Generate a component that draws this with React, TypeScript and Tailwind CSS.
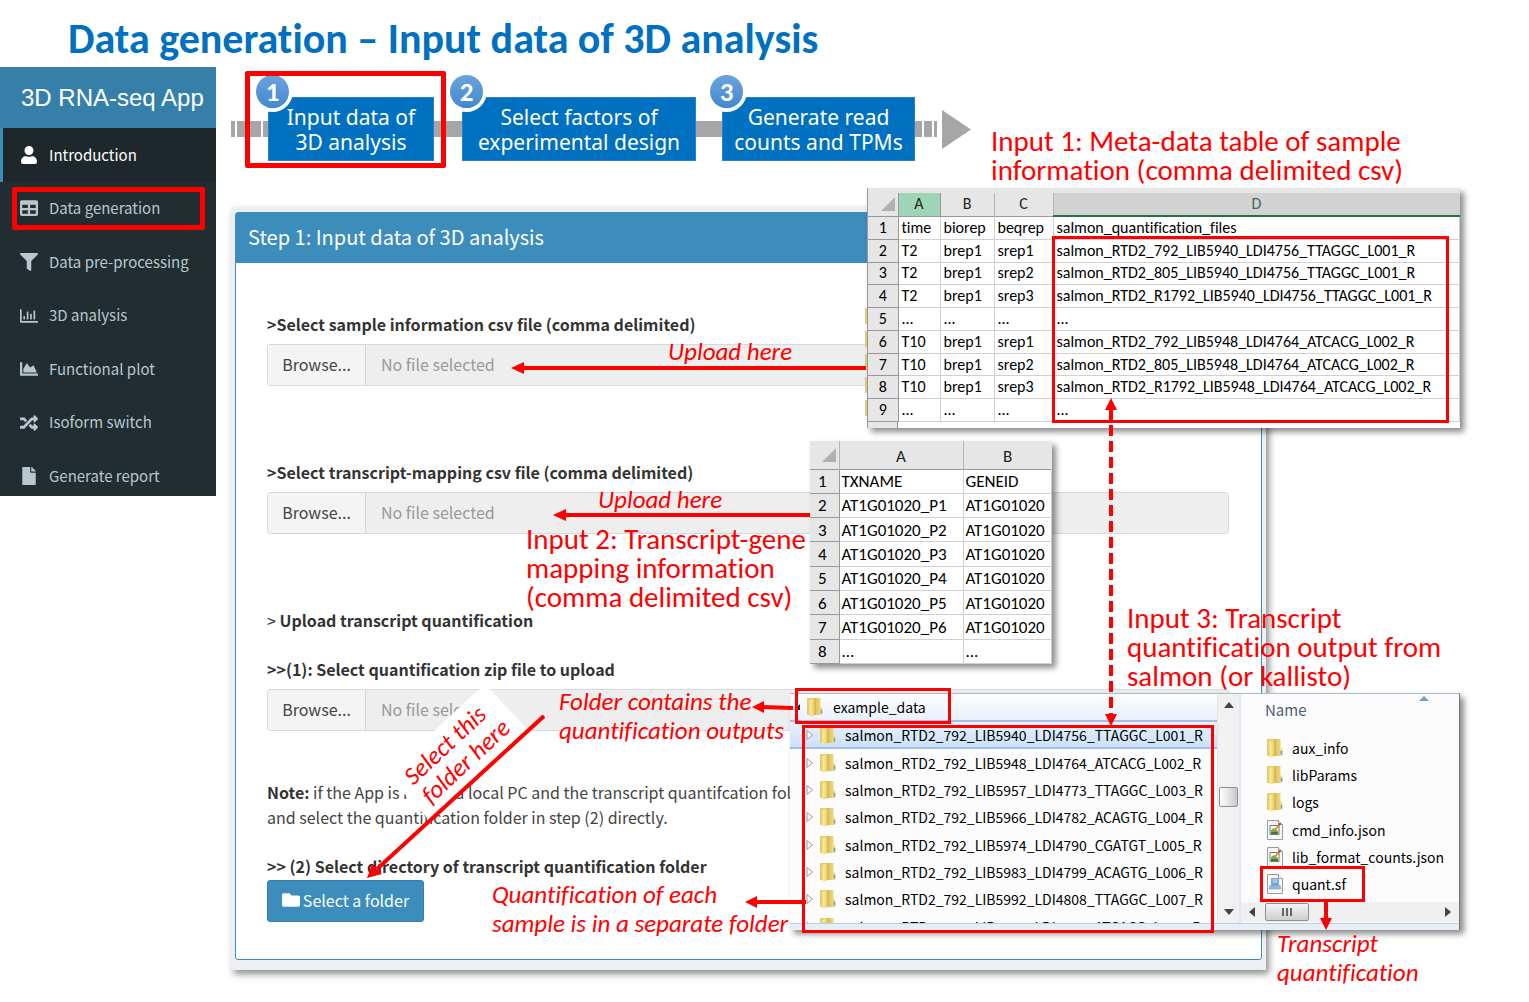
import type { ReactNode } from 'react'
import type { IconType } from 'react-icons'
import { FaChartArea, FaFile, FaFilter, FaFolder, FaRandom, FaRegChartBar, FaTable, FaUser } from 'react-icons/fa'

const menu: { label: string; icon: IconType; active?: boolean; marked?: boolean }[] = [
  { label: 'Introduction', icon: FaUser, active: true },
  { label: 'Data generation', icon: FaTable, marked: true },
  { label: 'Data pre-processing', icon: FaFilter },
  { label: '3D analysis', icon: FaRegChartBar },
  { label: 'Functional plot', icon: FaChartArea },
  { label: 'Isoform switch', icon: FaRandom },
  { label: 'Generate report', icon: FaFile },
]

const samples = [
  ['time', 'biorep', 'beqrep', 'salmon_quantification_files'],
  ['T2', 'brep1', 'srep1', 'salmon_RTD2_792_LIB5940_LDI4756_TTAGGC_L001_R'],
  ['T2', 'brep1', 'srep2', 'salmon_RTD2_805_LIB5940_LDI4756_TTAGGC_L001_R'],
  ['T2', 'brep1', 'srep3', 'salmon_RTD2_R1792_LIB5940_LDI4756_TTAGGC_L001_R'],
  ['...', '...', '...', '...'],
  ['T10', 'brep1', 'srep1', 'salmon_RTD2_792_LIB5948_LDI4764_ATCACG_L002_R'],
  ['T10', 'brep1', 'srep2', 'salmon_RTD2_805_LIB5948_LDI4764_ATCACG_L002_R'],
  ['T10', 'brep1', 'srep3', 'salmon_RTD2_R1792_LIB5948_LDI4764_ATCACG_L002_R'],
  ['...', '...', '...', '...'],
]

const mapping = [
  ['TXNAME', 'GENEID'],
  ['AT1G01020_P1', 'AT1G01020'],
  ['AT1G01020_P2', 'AT1G01020'],
  ['AT1G01020_P3', 'AT1G01020'],
  ['AT1G01020_P4', 'AT1G01020'],
  ['AT1G01020_P5', 'AT1G01020'],
  ['AT1G01020_P6', 'AT1G01020'],
  ['...', '...'],
]

const folders = [
  'salmon_RTD2_792_LIB5940_LDI4756_TTAGGC_L001_R',
  'salmon_RTD2_792_LIB5948_LDI4764_ATCACG_L002_R',
  'salmon_RTD2_792_LIB5957_LDI4773_TTAGGC_L003_R',
  'salmon_RTD2_792_LIB5966_LDI4782_ACAGTG_L004_R',
  'salmon_RTD2_792_LIB5974_LDI4790_CGATGT_L005_R',
  'salmon_RTD2_792_LIB5983_LDI4799_ACAGTG_L006_R',
  'salmon_RTD2_792_LIB5992_LDI4808_TTAGGC_L007_R',
]

const files: { name: string; kind: 'folder' | 'json' | 'sf' }[] = [
  { name: 'aux_info', kind: 'folder' },
  { name: 'libParams', kind: 'folder' },
  { name: 'logs', kind: 'folder' },
  { name: 'cmd_info.json', kind: 'json' },
  { name: 'lib_format_counts.json', kind: 'json' },
  { name: 'quant.sf', kind: 'sf' },
]

function FolderIcon() {
  return (
    <svg viewBox="0 0 18 20" className="h-5 w-[18px] shrink-0" aria-hidden="true">
      <defs>
        <linearGradient id="folderFront" x1="0" x2="1">
          <stop offset="0" stopColor="#fbeea6" />
          <stop offset="1" stopColor="#e6c95c" />
        </linearGradient>
        <linearGradient id="folderBack" x1="0" x2="1">
          <stop offset="0" stopColor="#d9bb50" />
          <stop offset="1" stopColor="#f3de8a" />
        </linearGradient>
      </defs>
      <path d="M1 1h7v17H1z" fill="#e6cc6c" />
      <path d="M7 1h7.500v9l2 1v6.500L14.500 18H7z" fill="url(#folderBack)" />
      <path d="M3.500 3 9 1v17l-5.500 1.800z" fill="url(#folderFront)" />
      <path d="M9 1v17" stroke="#c9a943" strokeWidth=".8" />
      <path d="M15.500 13v3.500" stroke="#4aa3d8" strokeWidth="1.400" />
    </svg>
  )
}

function FileIcon({ kind }: { kind: 'json' | 'sf' }) {
  return (
    <svg viewBox="0 0 18 20" className="h-5 w-[18px] shrink-0" aria-hidden="true">
      <path d="M1.500.500h11l4 4v15h-15z" fill="#f7f7f7" stroke="#9a9a9a" />
      <path d="M12.500.500v4h4" fill="#fff" stroke="#9a9a9a" />
      {kind === 'json' ? (
        <>
          <path d="M4 5.500h9v9H4z" fill="#fff" stroke="#777" />
          <path d="M5 10l3-2 4 3v3H5z" fill="#6fae3c" />
          <path d="M5 12h7v2H5z" fill="#3f7f2c" />
          <path d="m8 11 6-7" stroke="#e0862c" strokeWidth="1.800" />
          <path d="m13 5 1.500-2" stroke="#c43b2b" strokeWidth="1.800" />
        </>
      ) : (
        <>
          <path d="M5.500 4.500h7v7h-7z" fill="#6ea6dc" stroke="#8aa9c8" />
          <path d="M6.500 6h5M6.500 8h5" stroke="#d5e8fa" />
          <path d="M4 11.500h10l1 3.500H3z" fill="#8fb9e4" stroke="#7d9dc0" strokeWidth=".6" />
        </>
      )}
    </svg>
  )
}

function Corner() {
  return (
    <svg viewBox="0 0 14 14" className="mr-[3px] ml-auto size-3.5" aria-hidden="true">
      <path d="M14 0v14H0z" fill="#b1b1b1" />
    </svg>
  )
}

function Step({ no, className, lines }: { no: number; className: string; lines: [string, string] }) {
  return (
    <div className={`relative flex h-16 flex-col items-center justify-center border border-[#2a80cc] bg-[#0070c0] pt-0.5 font-['Noto_Sans',sans-serif] text-[21px] leading-[25px] whitespace-nowrap text-white ${className}`}>
      <span>{lines[0]}</span>
      <span>{lines[1]}</span>
      <span className="absolute -top-[23px] -left-[13px] flex size-[33px] items-center justify-center rounded-full bg-linear-to-b from-[#6ba3dd] to-[#4288cf] font-[Carlito,Lato,sans-serif] text-[27px] font-bold ring-4 ring-white">
        {no}
      </span>
    </div>
  )
}

function FilePicker({ id, label }: { id: string; label: string }) {
  return (
    <div className="flex flex-col gap-2">
      <label htmlFor={id} className="font-bold text-[#333]">{label}</label>
      <div className="flex h-[42px] overflow-hidden rounded-[3px] border border-[#d5d9e0] pb-0.5">
        <button type="button" className="-mb-0.5 w-[98px] border-r border-[#d2d6de] bg-[#f4f4f4] pb-0.5 text-[#444]">Browse...</button>
        <input id={id} readOnly placeholder="No file selected" className="-mb-0.5 min-w-0 flex-1 bg-[#eee] px-[15px] pb-0.5 placeholder:text-[#999]" />
      </div>
    </div>
  )
}

function Callout({ className, children }: { className: string; children: ReactNode }) {
  return (
    <p className={`absolute font-[Carlito,Lato,sans-serif] leading-[29px] whitespace-pre text-[#f00] [font-variant-ligatures:none] ${className}`}>
      {children}
    </p>
  )
}

function SampleTable() {
  return (
    <div className="absolute top-[188px] left-[867px] h-60 w-[593px] overflow-hidden border-l border-[#999] bg-[#e6e6e6] pt-[5px] shadow-[4px_4px_6px_rgba(0,0,0,0.45)]">
      <table className="h-[229px] w-full table-fixed border-collapse bg-white font-[Carlito,Lato,sans-serif] text-[16px] leading-5 whitespace-nowrap text-black [font-variant-ligatures:none]">
        <colgroup>
          <col className="w-[30px]" />
          <col className="w-[42px]" />
          <col className="w-[54px]" />
          <col className="w-[59px]" />
          <col />
        </colgroup>
        <thead>
          <tr className="h-[23px] border-b border-[#999] bg-[#e6e6e6]">
            <th scope="col" aria-label="Row"><Corner /></th>
            <th scope="col" className="border-x border-[#999] bg-[#9fd5b7] font-normal text-[#222]">A</th>
            <th scope="col" className="border-r border-[#b5b5b5] font-normal text-[#222]">B</th>
            <th scope="col" className="border-r border-[#b5b5b5] font-normal text-[#222]">C</th>
            <th scope="col" className="border-b-2 border-b-[#217346] bg-[#d2d2d2] font-normal text-[#376f57]">D</th>
          </tr>
        </thead>
        <tbody>
          {samples.map((row, i) => (
            <tr key={i} className="border-b border-[#d0d0d0]">
              <th scope="row" className="border-r border-b border-[#999] bg-[#e6e6e6] font-normal">{i + 1}</th>
              {row.map((cell, j) => (
                <td key={j} className="border-r border-[#d0d0d0] pl-[3px]">{cell}</td>
              ))}
            </tr>
          ))}
        </tbody>
      </table>
      <div className="flex h-2 bg-white">
        <span className="w-[30px] border-r border-[#999] bg-[#e6e6e6]" />
      </div>
    </div>
  )
}

function MappingTable() {
  return (
    <div className="absolute top-[441px] left-[810px] w-[242px] shadow-[4px_4px_6px_rgba(0,0,0,0.45)]">
      <table className="h-[223px] w-full table-fixed border-collapse bg-white font-[Carlito,Lato,sans-serif] text-[17px] leading-5 whitespace-nowrap text-black [font-variant-ligatures:none]">
        <colgroup>
          <col className="w-[29px]" />
          <col className="w-[124px]" />
          <col />
        </colgroup>
        <thead>
          <tr className="h-7 border-b border-[#999] bg-[#e6e6e6]">
            <th scope="col" aria-label="Row" className="border-r border-[#b5b5b5]"><Corner /></th>
            <th scope="col" className="border-r border-[#b5b5b5] pt-1 font-normal text-[#222]">A</th>
            <th scope="col" className="pt-1 font-normal text-[#222]">B</th>
          </tr>
        </thead>
        <tbody>
          {mapping.map((row, i) => (
            <tr key={i} className="border-b border-[#d0d0d0]">
              <th scope="row" className="border-r border-b border-[#999] bg-[#e6e6e6] pt-0.5 pr-1 font-normal">{i + 1}</th>
              {row.map((cell, j) => (
                <td key={j} className="border-r border-[#d0d0d0] pt-0.5 pl-0.5">{cell}</td>
              ))}
            </tr>
          ))}
        </tbody>
      </table>
    </div>
  )
}

function FolderRow({ name }: { name: string }) {
  return (
    <>
      <svg viewBox="0 0 8 12" className="mr-[5px] h-3 w-2 shrink-0" aria-hidden="true">
        <path d="M1 1.500 6.500 6 1 10.500z" fill="#fff" stroke="#999" />
      </svg>
      <FolderIcon />
      <span className="ml-2">{name}</span>
    </>
  )
}

function Explorer() {
  return (
    <div className="absolute top-[693px] left-[790px] flex h-[237px] w-[670px] flex-col border-t border-r border-t-[#a9bcd3] border-r-[#777] bg-[#fcfcfc] font-['Noto_Sans_CJK_SC',sans-serif] text-[14px] leading-5 whitespace-nowrap text-black shadow-[4px_4px_6px_rgba(0,0,0,0.45)]">
      <div className="flex min-h-0 flex-1">
        <div className="flex w-[427px] flex-col overflow-hidden">
          <div className="flex h-7 shrink-0 items-center border-b-2 border-[#a3bfe8] bg-linear-to-b from-[#fdfeff] to-[#e9f1fc] pl-[3px]">
            <svg viewBox="0 0 8 8" className="mr-[5px] size-2" aria-hidden="true">
              <path d="M7 1v6H1z" fill="#222" />
            </svg>
            <FolderIcon />
            <span className="ml-[9px]">example_data</span>
          </div>
          <ul className="grid h-[191px] shrink-0 grid-rows-7">
            {folders.map((name, i) => (
              <li key={name} className={`flex items-center pl-4 ${i === 0 ? 'border-b-2 border-[#a3bfe8] bg-linear-to-b from-[#eaf2fd] to-[#cbe0fb]' : ''}`}>
                <FolderRow name={name} />
              </li>
            ))}
          </ul>
          <div className="flex h-[27px] shrink-0 items-center pl-4">
            <FolderRow name="salmon_RTD2_792_LIB6000_LDI4816_ATCACG_L008_R" />
          </div>
        </div>
        <div className="flex w-[22px] flex-col items-center justify-between border-l border-[#e4e4e4] bg-[#f1f1f1] py-2">
          <svg viewBox="0 0 10 6" className="h-1.5 w-2.5" aria-hidden="true"><path d="M5 0 10 6H0z" fill="#444" /></svg>
          <span className="mb-6 h-5 w-[19px] rounded-xs border border-[#8f8f8f] bg-linear-to-r from-white to-[#c9c9cc]" />
          <svg viewBox="0 0 10 6" className="h-1.5 w-2.5" aria-hidden="true"><path d="M5 6 10 0H0z" fill="#444" /></svg>
        </div>
        <div className="flex flex-1 flex-col border-l-2 border-[#dfe9f6]">
          <div className="flex h-10 justify-between pt-1.5 pr-[30px] pl-6 text-[15px] text-[#4c607a]">
            Name
            <svg viewBox="0 0 10 5" className="-mt-1 h-[5px] w-2.5" aria-hidden="true"><path d="M5 0 10 5H0z" fill="#6f9fc6" /></svg>
          </div>
          <ul className="flex h-[164px] flex-col">
            {files.map(({ name, kind }) => (
              <li key={name} className="flex flex-1 items-center gap-2 pl-[25px]">
                {kind === 'folder' ? <FolderIcon /> : <FileIcon kind={kind} />}
                {name}
              </li>
            ))}
          </ul>
          <div className="mt-1 flex h-5 items-center bg-[#f0f0f0] px-2">
            <svg viewBox="0 0 6 10" className="h-2.5 w-1.5" aria-hidden="true"><path d="M6 0v10L0 5z" fill="#444" /></svg>
            <span className="ml-2.5 flex h-[18px] w-11 items-center justify-center gap-0.5 rounded-xs border border-[#8f8f8f] bg-linear-to-b from-[#f4f4f4] to-[#cfcfcf]">
              <span className="h-2 w-0.5 bg-[#666]" />
              <span className="h-2 w-0.5 bg-[#666]" />
              <span className="h-2 w-0.5 bg-[#666]" />
            </span>
            <svg viewBox="0 0 6 10" className="ml-auto h-2.5 w-1.5" aria-hidden="true"><path d="M0 0v10l6-5z" fill="#444" /></svg>
          </div>
        </div>
      </div>
      <div className="h-[7px] border-t border-[#b9cde5] bg-[#e6eef8]" />
    </div>
  )
}

function Arrows() {
  return (
    <svg viewBox="0 0 1529 1002" className="pointer-events-none absolute top-0 left-0 h-[1002px] w-[1529px]" fill="none" stroke="#f00" strokeWidth="4" aria-hidden="true">
      <path d="M866 368H521M810 515H564M793 708l-32-1M806 902h-50M1326 902v18" />
      <path d="M1111 409v306" strokeDasharray="11 5" />
      <path d="M544 716 377 869" />
      <g fill="#f00" stroke="none">
        <path d="m511 368 13-6v12zM553 515l13-6v12zM752 707l12-6v12zM745 902l12-6v12z" />
        <path d="m1326 930-6-12h12zM1111 398l-6 12h12zM1111 726l-6-12h12z" />
        <path d="m367 878 5-14 10 10z" />
      </g>
    </svg>
  )
}

export default function App() {
  return (
    <div className="relative min-h-screen overflow-hidden bg-white pb-8">
      <header className="flex h-[67px] items-center pt-2.5 pl-[68px]">
        <h1 className="font-[Carlito,Lato,sans-serif] text-[42px] leading-none font-bold whitespace-nowrap text-[#0070c0] [font-variant-ligatures:none]">
          Data generation – Input data of 3D analysis
        </h1>
      </header>

      <div className="flex items-start">
        <aside className="w-[216px] shrink-0 bg-[#222d32]">
          <div className="flex h-[61px] items-center bg-[#367fa9] pl-[21px] font-['Liberation_Sans',sans-serif] text-[24px] whitespace-nowrap text-white">
            3D RNA-seq App
          </div>
          <nav className="h-[368px] overflow-hidden font-['Noto_Sans_CJK_SC',sans-serif] text-[15px]">
            <ul className="flex h-[375px] flex-col">
              {menu.map(({ label, icon: Icon, active, marked }) => (
                <li key={label} className="relative flex-1">
                  <a href="#" className={`flex h-full items-center gap-[11px] border-l-3 pl-[17px] ${active ? 'border-[#3c8dbc] bg-[#1e282c] text-white' : 'border-transparent text-[#b8c7ce]'}`}>
                    <Icon className="size-[18px]" />
                    {label}
                  </a>
                  {marked && <span className="pointer-events-none absolute inset-y-[5px] right-[11px] left-3 rounded-xs border-5 border-[#f00]" />}
                </li>
              ))}
            </ul>
          </nav>
        </aside>

        <main className="min-w-0 flex-1 pr-[263px] pl-[15px]">
          <div className="flex items-center pt-[30px]">
            <div className="flex h-4 w-[37px] shrink-0 gap-0.5">
              <span className="w-1 bg-[#a6a6a6]" />
              <span className="w-6 bg-[#a6a6a6]" />
              <span className="flex-1 bg-[#a6a6a6]" />
            </div>
            <Step no={1} className="w-[166px] shrink-0" lines={['Input data of', '3D analysis']} />
            <span className="h-4 w-7 shrink-0 bg-[#a6a6a6]" />
            <Step no={2} className="w-[234px] shrink-0" lines={['Select factors of', 'experimental design']} />
            <span className="h-4 w-[26px] shrink-0 bg-[#a6a6a6]" />
            <Step no={3} className="w-[193px] shrink-0" lines={['Generate read', 'counts and TPMs']} />
            <div className="flex h-4 shrink-0 gap-0.5">
              <span className="w-[7px] bg-[#a6a6a6]" />
              <span className="w-2 bg-[#a6a6a6]" />
              <span className="w-[3px] bg-[#a6a6a6]" />
            </div>
            <svg viewBox="0 0 29 39" className="ml-[5px] h-[39px] w-[29px] shrink-0" aria-hidden="true">
              <path d="M0 0 29 19.500 0 39z" fill="#a6a6a6" />
            </svg>
          </div>

          <div className="mt-[46px] bg-[#ecf0f5] px-1 pt-[5px] pb-2.5 shadow-[3px_4px_7px_rgba(0,0,0,0.45)]">
            <section className="rounded-[3px] border border-[#3c8dbc] bg-white font-['Noto_Sans_CJK_SC',sans-serif] text-[16px] leading-6 text-[#444]">
              <h2 className="flex h-[50px] items-center bg-[#3c8dbc] pb-0.5 pl-3 text-[20px] text-white">Step 1: Input data of 3D analysis</h2>
              <div className="pt-[49px] pr-8 pb-[37px] pl-[31px]">
                <FilePicker id="sample-file" label=">Select sample information csv file (comma delimited)" />
                <div className="mt-[74px]">
                  <FilePicker id="mapping-file" label=">Select transcript-mapping csv file (comma delimited)" />
                </div>
                <h3 className="mt-[74px] mb-[25px] font-bold text-[#333]"><span className="font-normal">&gt;</span> Upload transcript quantification</h3>
                <FilePicker id="zip-file" label=">>(1): Select quantification zip file to upload" />
                <p className="mt-[49px] leading-[25px] whitespace-nowrap">
                  <b className="text-[#333]">Note:</b> if the App is run on a local PC and the transcript quantifcation folder
                  <br />
                  and select the quantification folder in step (2) directly.
                </p>
                <h3 className="mt-6 font-bold text-[#333]">&gt;&gt; (2) Select directory of transcript quantification folder</h3>
                <button type="button" className="mt-0.5 flex h-[42px] w-[157px] items-center justify-center gap-[3px] rounded-[3px] border border-[#367fa9] bg-[#3c8dbc] pb-0.5 text-white">
                  <FaFolder className="size-[18px]" />
                  Select a folder
                </button>
              </div>
            </section>
          </div>
        </main>
      </div>

      <span className="absolute top-[71px] left-[245px] h-[97px] w-[201px] rounded-xs border-5 border-[#f00]" />

      <Callout className="top-[127px] left-[991px] text-[29px]">{'Input 1: Meta-data table of sample\ninformation (comma delimited csv)'}</Callout>
      <Callout className="top-[525px] left-[526px] text-[29px]">{'Input 2: Transcript-gene\nmapping information\n(comma delimited csv)'}</Callout>
      <Callout className="top-[337px] left-[668px] text-[25px] italic">Upload here</Callout>
      <Callout className="top-[485px] left-[598px] text-[25px] italic">Upload here</Callout>

      <div className="absolute top-[308px] left-[865px] flex flex-col gap-[7px]" aria-hidden="true">
        <span className="h-4 w-[3px] bg-[#e6cf78]" />
        <span className="h-4 w-[3px] bg-[#e6cf78]" />
        <span className="h-4 w-[3px] bg-[#e6cf78]" />
        <span className="h-4 w-[3px] bg-[#e6cf78]" />
        <span className="h-4 w-[3px] bg-[#e6cf78]" />
      </div>
      <SampleTable />
      <span className="absolute top-[236px] left-[1052px] h-[187px] w-[397px] border-3 border-[#f00]" />
      <MappingTable />

      <Callout className="top-[604px] left-[1127px] text-[29px]">{'Input 3: Transcript\nquantification output from\nsalmon (or kallisto)'}</Callout>
      <Explorer />
      <span className="absolute top-[688px] left-[795px] h-9 w-[156px] border-3 border-[#f00]" />
      <span className="absolute top-[725px] left-[802px] h-52 w-[412px] border-3 border-[#f00]" />
      <span className="absolute top-[866px] left-[1260px] h-9 w-[105px] border-3 border-[#f00]" />

      <Callout className="top-[687px] left-[559px] text-[25px] italic">{'Folder contains the\nquantification outputs'}</Callout>
      <Callout className="top-[880px] left-[492px] text-[25px] italic">{'Quantification of each\nsample is in a separate folder'}</Callout>
      <Callout className="top-[929px] left-[1277px] text-[25px] italic">{'Transcript\nquantification'}</Callout>

      <div className="absolute top-[721px] left-[390px] flex h-[62px] w-[134px] rotate-[-43deg] items-center justify-center bg-white">
        <p className="font-[Carlito,Lato,sans-serif] text-[25px] leading-[26px] whitespace-pre text-[#f00] italic [font-variant-ligatures:none]">{'Select this\nfolder here'}</p>
      </div>
      <Arrows />
    </div>
  )
}
